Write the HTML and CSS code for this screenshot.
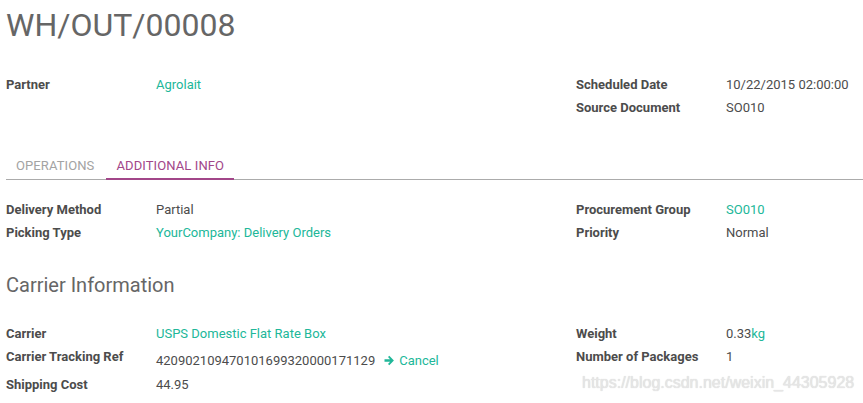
FILE: index.html
```html
<!DOCTYPE html>
<html lang="en">
<head>
  <meta charset="UTF-8" />
  <title>WH/OUT/00008</title>
  <link rel="stylesheet" href="styles.css">
</head>
<body>
  <div class="sheet">
    <h1 class="title">WH/OUT/00008</h1>

    <div class="groups top">
      <div class="group">
        <div class="row"><span class="label">Partner</span><a class="value link" href="#">Agrolait</a></div>
      </div>
      <div class="group">
        <div class="row"><span class="label">Scheduled Date</span><span class="value">10/22/2015 02:00:00</span></div>
        <div class="row"><span class="label">Source Document</span><span class="value">SO010</span></div>
      </div>
    </div>

    <div class="tabs">
      <a class="tab" href="#">OPERATIONS</a>
      <a class="tab active" href="#">ADDITIONAL INFO</a>
    </div>

    <div class="groups info">
      <div class="group">
        <div class="row"><span class="label">Delivery Method</span><span class="value">Partial</span></div>
        <div class="row"><span class="label">Picking Type</span><a class="value link" href="#">YourCompany: Delivery Orders</a></div>
      </div>
      <div class="group">
        <div class="row"><span class="label">Procurement Group</span><a class="value link" href="#">SO010</a></div>
        <div class="row"><span class="label">Priority</span><span class="value">Normal</span></div>
      </div>
    </div>

    <h2 class="section">Carrier Information</h2>

    <div class="groups carrier">
      <div class="group">
        <div class="row"><span class="label">Carrier</span><a class="value link" href="#">USPS Domestic Flat Rate Box</a></div>
        <div class="row tall">
          <span class="label">Carrier Tracking Ref</span>
          <span class="value">420902109470101699320000171129<a class="cancel" href="#"><svg width="11" height="11" viewBox="0 0 11 11"><path d="M0.5 4.2h5.6L4 2.1 5.3 0.8 9.9 5.5 5.3 10.2 4 8.9 6.1 6.8H0.5z" fill="#21b799"/></svg>Cancel</a></span>
        </div>
        <div class="row"><span class="label">Shipping Cost</span><span class="value">44.95</span></div>
      </div>
      <div class="group">
        <div class="row"><span class="label">Weight</span><span class="value">0.33<span class="unit">kg</span></span></div>
        <div class="row"><span class="label">Number of Packages</span><span class="value">1</span></div>
      </div>
    </div>

    <div class="watermark">https://blog.csdn.net/weixin_44305928</div>
  </div>
</body>
</html>
```

FILE: styles.css
```css
body {
  margin: 0;
  padding: 0;
  background: #fff;
  font-family: Roboto, "Noto Sans", sans-serif;
  font-size: 13px;
  color: #4c4c4c;
}

.sheet {
  position: relative;
  padding: 6px 0 0 6px;
  height: 397px;
  overflow: hidden;
}

.title {
  margin: 0;
  font-size: 32px;
  line-height: 38px;
  font-weight: 400;
  color: #666;
}

.groups {
  display: grid;
  grid-template-columns: 570px 1fr;
}

.groups.top {
  margin-top: 29px;
}

.groups.info {
  margin-top: 18px;
}

.groups.carrier {
  margin-top: 25px;
}

.row {
  display: flex;
  line-height: 23px;
}

.row.tall {
  height: 28px;
}

.row.tall .value {
  padding-top: 4px;
}

.label {
  width: 150px;
  flex-shrink: 0;
  font-weight: 700;
  color: #4c4c4c;
}

.value {
  color: #4c4c4c;
}

a {
  text-decoration: none;
}

.link, .unit {
  color: #21b799;
}

.cancel {
  color: #21b799;
  margin-left: 9px;
}

.cancel svg {
  margin-right: 4px;
  vertical-align: -1px;
}

.tabs {
  display: flex;
  gap: 2px;
  margin-top: 29px;
  border-bottom: 1px solid #ababab;
}

.tab {
  padding: 9px 10px 3px;
  line-height: 18px;
  letter-spacing: 0.1px;
  color: #a3a3a3;
  border-bottom: 2px solid transparent;
  margin-bottom: -1px;
}

.tab.active {
  color: #a24689;
  border-bottom-color: #a24689;
}

.section {
  margin: 29px 0 0;
  font-size: 20px;
  line-height: 24px;
  font-weight: 400;
  color: #666;
}

.watermark {
  position: absolute;
  left: 582px;
  top: 374px;
  font-family: "Liberation Sans", Arial, sans-serif;
  font-size: 16px;
  color: #e6e6e6;
  text-shadow: 0 0 1px #cfcfcf;
}
```
